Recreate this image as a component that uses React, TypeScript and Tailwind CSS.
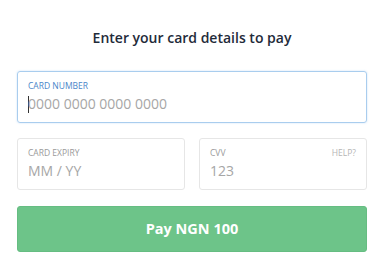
const Field = ({
  label,
  placeholder,
  active,
  help,
}: {
  label: string;
  placeholder: string;
  active?: boolean;
  help?: boolean;
}) => {
  return (
    <div
      className={
        active
          ? "h-[52px] rounded-[3px] border border-[#a9cdee] px-[10px] pt-[8px] shadow-[0_0_2px_rgba(90,160,230,0.35)]"
          : "h-[52px] rounded-[3px] border border-[#e6e6e6] px-[10px] pt-[8px]"
      }
    >
      <div className="flex justify-between text-[8.5px] leading-[12px] uppercase">
        <span className={active ? "text-[#4a86c9]" : "text-[#9a9a9a]"}>{label}</span>
        {help && <span className="text-[#b5b5b5]">Help?</span>}
      </div>
      <div className="mt-[2px] flex items-center text-[14px] leading-[20px] text-[#a6a6a6]">
        {active && <span className="mr-[-1px] h-[17px] w-[1px] bg-[#333]" />}
        <span>{placeholder}</span>
      </div>
    </div>
  );
};

export default function App() {
  return (
    <div
      className="h-[266px] w-[384px] bg-white px-[17px] pt-[28px]"
      style={{ fontFamily: "'Open Sans', 'Noto Sans', sans-serif" }}
    >
      <h1 className="text-center text-[14px] font-semibold leading-[20px] text-[#1f2b3a]">
        Enter your card details to pay
      </h1>
      <div className="mt-[23px]">
        <Field label="Card Number" placeholder="0000 0000 0000 0000" active />
      </div>
      <div className="mt-[15px] grid grid-cols-2 gap-[14px]">
        <Field label="Card Expiry" placeholder="MM / YY" />
        <Field label="CVV" placeholder="123" help />
      </div>
      <button className="mt-[16px] h-[46px] w-full rounded-[3px] border border-[#66bd82] bg-[#6dc489] text-[14.5px] font-bold text-white">
        Pay NGN 100
      </button>
    </div>
  );
}
